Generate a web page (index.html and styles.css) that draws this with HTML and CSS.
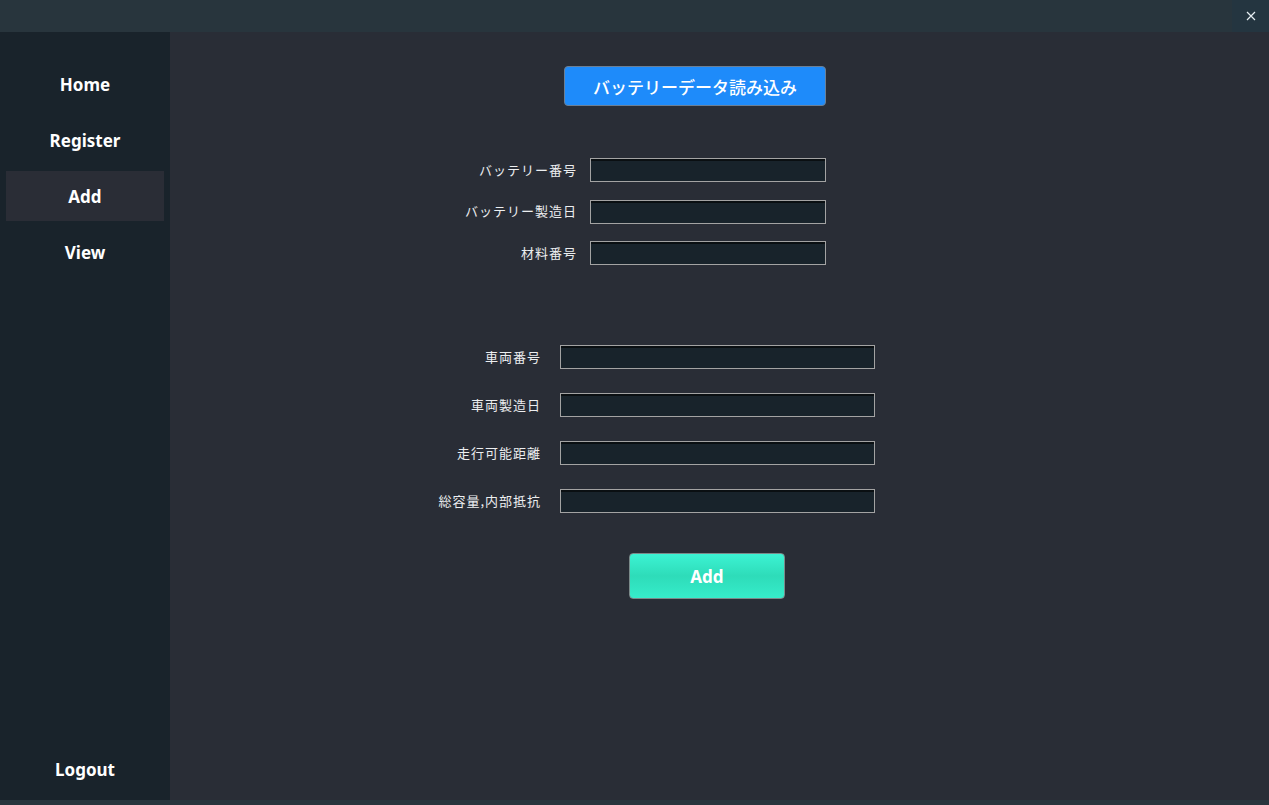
FILE: index.html
```html
<!DOCTYPE html>
<html lang="ja">
<head>
<meta charset="utf-8">
<title>Add</title>
<link rel="stylesheet" href="styles.css">
</head>
<body>
<div class="app">
  <header class="titlebar">
    <div class="close">
      <svg width="10" height="10" viewBox="0 0 10 10"><path d="M1 1 L9 9 M9 1 L1 9" stroke="#e6eef2" stroke-width="1.2" fill="none"/></svg>
    </div>
  </header>
  <div class="body">
    <nav class="sidebar">
      <div class="nav-top">
        <div class="nav-item">Home</div>
        <div class="nav-item">Register</div>
        <div class="nav-item active">Add</div>
        <div class="nav-item">View</div>
      </div>
      <div class="nav-item logout">Logout</div>
    </nav>
    <main class="main">
      <button class="load-btn">バッテリーデータ読み込み</button>
      <div class="group group-battery">
        <div class="row"><label class="label">バッテリー番号</label><div class="input"></div></div>
        <div class="row"><label class="label">バッテリー製造日</label><div class="input"></div></div>
        <div class="row"><label class="label">材料番号</label><div class="input"></div></div>
      </div>
      <div class="group group-vehicle">
        <div class="row"><label class="label">車両番号</label><div class="input"></div></div>
        <div class="row"><label class="label">車両製造日</label><div class="input"></div></div>
        <div class="row"><label class="label">走行可能距離</label><div class="input"></div></div>
        <div class="row"><label class="label">総容量,内部抵抗</label><div class="input"></div></div>
      </div>
      <button class="add-btn">Add</button>
    </main>
  </div>
  <div class="bottombar"></div>
</div>
</body>
</html>
```

FILE: styles.css
```css
* { box-sizing: border-box; }
html, body { margin: 0; padding: 0; height: 100%; }
body {
  background: #292d36;
  font-family: "Noto Sans", "Noto Sans CJK JP", sans-serif;
  color: #fff;
  overflow: hidden;
}
.app { display: flex; flex-direction: column; height: 805px; width: 1269px; }
.titlebar {
  height: 32px;
  background: #28353d;
  display: flex;
  justify-content: flex-end;
  flex: none;
}
.close {
  width: 37px;
  height: 32px;
  background: #243540;
  display: flex;
  align-items: center;
  justify-content: center;
}
.body { flex: 1; display: flex; min-height: 0; }
.sidebar {
  width: 170px;
  background: #19232b;
  display: flex;
  flex-direction: column;
  justify-content: space-between;
  padding: 27px 6px 6px;
  flex: none;
}
.nav-top { display: flex; flex-direction: column; gap: 6px; }
.nav-item {
  height: 50px;
  display: flex;
  align-items: center;
  justify-content: center;
  font-weight: 700;
  font-size: 17px;
  color: #fff;
}
.nav-item.active { background: #2a2d36; }
.main {
  flex: 1;
  display: flex;
  flex-direction: column;
  align-items: flex-start;
  padding-top: 34px;
}
.load-btn {
  margin-left: 394px;
  width: 262px;
  height: 40px;
  background: #1e8bfa;
  border: 1px solid #6b7f95;
  border-radius: 4px;
  color: #fff;
  font-family: "Noto Sans CJK JP", sans-serif;
  font-size: 17px;
  font-weight: 500;
  padding: 0;
}
.group { display: flex; flex-direction: column; }
.group-battery { margin-top: 52px; margin-left: 256px; gap: 17.5px; }
.group-vehicle { margin-top: 80px; margin-left: 220px; gap: 24px; }
.row { display: flex; align-items: center; }
.label {
  font-family: "Noto Sans CJK JP", sans-serif;
  font-size: 13px;
  letter-spacing: 1px;
  color: #eceef0;
  text-align: right;
  position: relative;
  top: -1px;
}
.group-battery .label { width: 151px; margin-right: 13px; }
.group-vehicle .label { width: 151px; margin-right: 19px; }
.input {
  height: 24px;
  background: #18232b;
  border: 1px solid #a3a3a3;
  box-shadow: inset 0 2px 0 #0a0f12;
}
.group-battery .input { width: 236px; }
.group-vehicle .input { width: 315px; }
.add-btn {
  margin-top: 40px;
  margin-left: 459px;
  width: 156px;
  height: 46px;
  background: linear-gradient(#3cf3d3, #2edcb9 50%, #36ecca);
  border: 1px solid #7a8a8a;
  border-radius: 4px;
  color: #fff;
  font-family: "Noto Sans", sans-serif;
  font-weight: 700;
  font-size: 17px;
  padding: 0;
}
.bottombar { height: 5px; background: #28353d; flex: none; }
```
